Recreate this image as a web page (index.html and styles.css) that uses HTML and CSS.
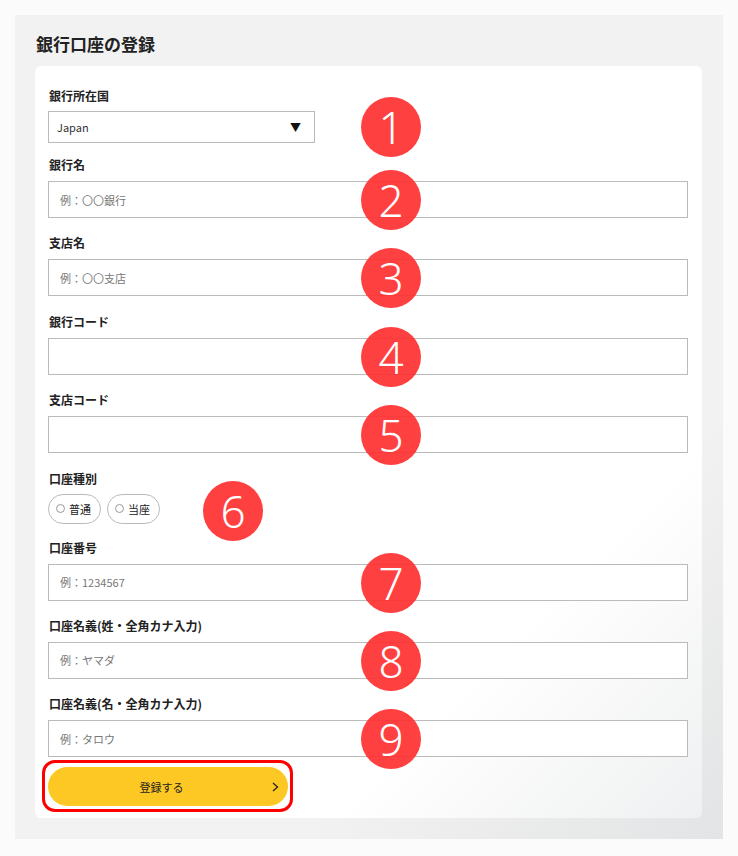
FILE: index.html
```html
<!doctype html>
<html lang="ja">
<head>
  <meta charset="UTF-8" />
  <meta name="viewport" content="width=device-width, initial-scale=1.0" />
  <title>銀行口座の登録</title>
  <link rel="stylesheet" href="styles.css">
</head>
<body>

  <div class="panel">
    <h2 class="title">銀行口座の登録</h2>

    <form class="card">
      <div class="field">
        <label class="label">銀行所在国</label>
        <div class="select">
          <span>Japan</span>
          <span class="arrow">▼</span>
        </div>
        <span class="badge badge-first">1</span>
      </div>

      <div class="field">
        <label class="label">銀行名</label>
        <input class="input" type="text" placeholder="例：〇〇銀行" />
        <span class="badge">2</span>
      </div>

      <div class="field">
        <label class="label">支店名</label>
        <input class="input" type="text" placeholder="例：〇〇支店" />
        <span class="badge">3</span>
      </div>

      <div class="field">
        <label class="label">銀行コード</label>
        <input class="input" type="text" />
        <span class="badge">4</span>
      </div>

      <div class="field">
        <label class="label">支店コード</label>
        <input class="input" type="text" />
        <span class="badge">5</span>
      </div>

      <div class="field field-kind">
        <label class="label">口座種別</label>
        <div class="pills">
          <label class="pill"><span class="dot"></span>普通</label>
          <label class="pill"><span class="dot"></span>当座</label>
        </div>
        <span class="badge badge-kind">6</span>
      </div>

      <div class="field">
        <label class="label">口座番号</label>
        <input class="input" type="text" placeholder="例：1234567" />
        <span class="badge">7</span>
      </div>

      <div class="field">
        <label class="label">口座名義(姓・全角カナ入力)</label>
        <input class="input" type="text" placeholder="例：ヤマダ" />
        <span class="badge">8</span>
      </div>

      <div class="field field-last">
        <label class="label">口座名義(名・全角カナ入力)</label>
        <input class="input" type="text" placeholder="例：タロウ" />
        <span class="badge">9</span>
      </div>

      <div class="actions">
        <button class="submit" type="button">
          登録する
          <svg class="chevron" width="7" height="10" viewBox="0 0 7 10">
            <polyline points="1,1 5.5,5 1,9" fill="none" stroke="#222" stroke-width="1.3" />
          </svg>
        </button>
      </div>
    </form>
  </div>

</body>
</html>
```

FILE: styles.css
```css
body {
  margin: 0;
  background: #fbfbfb;
  font-family: "Noto Sans CJK JP", "Noto Sans", sans-serif;
  color: #222;
}

.panel {
  width: 708px;
  margin: 15px 0 0 15px;
  padding: 17px 21px 21px 20px;
  box-sizing: border-box;
  background: linear-gradient(135deg, #f2f2f2 72%, #e3e4e5 100%);
}

.title {
  margin: 0 0 10px 1px;
  font-size: 17px;
  line-height: 24px;
  font-weight: 700;
  color: #222;
}

.card {
  display: block;
  background: linear-gradient(135deg, #ffffff 74%, #eff0f1 100%);
  border-radius: 6px;
  padding: 21px 14px 12px 13px;
}

.field {
  position: relative;
  margin-bottom: 16.4px;
}

.field:first-child {
  margin-bottom: 13px;
}

.field-kind {
  margin-bottom: 15px;
}

.label {
  display: block;
  font-size: 12px;
  line-height: 18px;
  font-weight: 700;
  margin: 0 0 7px 1px;
}

.field:first-child .label,
.field-kind .label {
  margin-bottom: 6px;
}

.select {
  width: 267px;
  height: 32px;
  box-sizing: border-box;
  border: 1px solid #bbb;
  display: flex;
  align-items: center;
  justify-content: space-between;
  padding: 0 13px 0 8px;
  font-size: 11px;
  color: #333;
  background: #fff;
}

.arrow {
  font-size: 11px;
  color: #111;
}

.input {
  display: block;
  width: 100%;
  height: 37px;
  box-sizing: border-box;
  border: 1px solid #bbb;
  border-radius: 0;
  padding: 0 11px;
  font-family: inherit;
  font-size: 11px;
  background: #fff;
  outline: none;
}

.input::placeholder {
  color: #777;
}

.pills {
  display: flex;
  gap: 6px;
}

.pill {
  display: flex;
  align-items: center;
  gap: 4px;
  height: 30px;
  box-sizing: border-box;
  padding: 0 9px 0 7px;
  border: 1px solid #bbb;
  border-radius: 16px;
  font-size: 11px;
  color: #222;
}

.dot {
  width: 9px;
  height: 9px;
  box-sizing: border-box;
  border: 1px solid #999;
  border-radius: 50%;
}

.badge {
  position: absolute;
  left: 313px;
  top: 14px;
  width: 60px;
  height: 60px;
  border-radius: 50%;
  background: rgba(255, 50, 50, 0.93);
  color: #fff;
  font-family: "Noto Sans", sans-serif;
  font-size: 44px;
  font-weight: 300;
  line-height: 60px;
  text-align: center;
}

.badge-first {
  top: 10px;
}

.badge-kind {
  left: 155px;
  top: 11px;
}

.field-last {
  margin-bottom: 10px;
}

.actions {
  position: relative;
  width: 240px;
}

.actions::before {
  content: "";
  position: absolute;
  left: -6px;
  right: -5px;
  top: -7px;
  bottom: -6px;
  border: 3px solid #f00;
  border-radius: 13px;
  box-sizing: border-box;
}

.submit {
  position: relative;
  display: flex;
  align-items: center;
  justify-content: center;
  width: 240px;
  height: 39px;
  padding: 0 13px 0 0;
  border: none;
  border-radius: 20px;
  background: #fdc823;
  font-family: inherit;
  font-size: 11px;
  color: #222;
  cursor: pointer;
}

.chevron {
  position: absolute;
  right: 9px;
  top: 15px;
}
```
